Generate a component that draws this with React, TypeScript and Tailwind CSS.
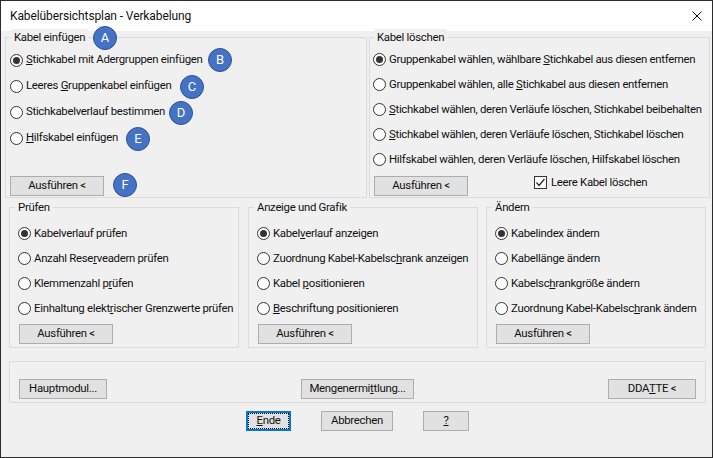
import React from "react";

const font = { fontFamily: 'Roboto, sans-serif' };

function Radio({ on }: { on?: boolean }) {
  return (
    <span className="w-[13px] h-[13px] shrink-0 rounded-full border border-[#333333] bg-white flex items-center justify-center">
      {on && <span className="w-[7px] h-[7px] rounded-full bg-[#333333]" />}
    </span>
  );
}

function Row({ on, h, children }: { on?: boolean; h: string; children: React.ReactNode }) {
  return (
    <div className={`flex items-center gap-[3px] whitespace-nowrap ${h}`}>
      <Radio on={on} />
      <span>{children}</span>
    </div>
  );
}

function Btn({ w, focus, children }: { w: string; focus?: boolean; children: React.ReactNode }) {
  if (focus) {
    return (
      <div className={`${w} h-[20px] border-2 border-[#0078d7] bg-[#e1e1e1] flex items-center justify-center`}>
        <div className="w-full h-full border border-dotted border-black flex items-center justify-center">{children}</div>
      </div>
    );
  }
  return <div className={`${w} h-[20px] border border-[#adadad] bg-[#e1e1e1] flex items-center justify-center`}>{children}</div>;
}

function Legend({ children, x }: { children: React.ReactNode; x: string }) {
  return <span className={`absolute -top-[9px] ${x} bg-[#f0f0f0] px-[3px] leading-[16px]`}>{children}</span>;
}

function Badge({ c, cls }: { c: string; cls: string }) {
  return (
    <span className={`absolute ${cls} w-[24px] h-[24px] rounded-full bg-[#4472c4] border border-[#2f528f] text-white text-[13px] tracking-normal flex items-center justify-center`}>
      {c}
    </span>
  );
}

export default function App() {
  return (
    <div style={font} className="relative w-[713px] h-[458px] border border-[#2b2b2b] bg-[#f0f0f0] text-[11.4px] tracking-[-0.3px] text-[#111111] flex flex-col overflow-hidden">
      <div className="h-[30px] bg-white flex items-center justify-between pl-[9px] pr-[10px] text-[12px] tracking-[-0.1px] shrink-0">
        <span>Kabelübersichtsplan - Verkabelung</span>
        <svg width="10" height="10" viewBox="0 0 10 10" stroke="#111" strokeWidth="1" fill="none"><path d="M0.5 0.5L9.5 9.5M9.5 0.5L0.5 9.5" /></svg>
      </div>

      <div className="flex gap-[2px] pl-[4px] mt-[6px] h-[161px]">
        <div className="relative w-[362px] border border-[#dcdcdc] pt-[9px] pl-[4px] flex flex-col">
          <Legend x="left-[5px]">Kabel einfügen</Legend>
          <Row on h="h-[26px]"><u>S</u>tichkabel mit Adergruppen einfügen</Row>
          <Row h="h-[26px]">Leeres <u>G</u>ruppenkabel einfügen</Row>
          <Row h="h-[26px]">Stichkabelverlauf bestimmen</Row>
          <Row h="h-[26px]"><u>H</u>ilfskabel einfügen</Row>
          <div className="mt-auto mb-[1px]"><Btn w="w-[94px]">Ausführen &lt;</Btn></div>
        </div>
        <div className="relative w-[341px] border border-[#dcdcdc] pt-[9px] pl-[3px] flex flex-col">
          <Legend x="left-[4px]">Kabel löschen</Legend>
          <Row on h="h-[25px]">Gruppenkabel wählen, wählbare <u>S</u>tichkabel aus diesen entfernen</Row>
          <Row h="h-[25px]">Gruppenkabel wählen, alle <u>S</u>tichkabel aus diesen entfernen</Row>
          <Row h="h-[25px]"><u>S</u>tichkabel wählen, deren Verläufe löschen, Stichkabel beibehalten</Row>
          <Row h="h-[25px]"><u>S</u>tichkabel wählen, deren Verläufe löschen, Stichkabel löschen</Row>
          <Row h="h-[25px]">Hilfskabel wählen, deren Verläufe löschen, Hilfskabel löschen</Row>
          <div className="flex items-start mt-auto mb-[1px] ml-[1px]">
            <Btn w="w-[94px]">Ausführen &lt;</Btn>
            <div className="flex items-center gap-[4px] ml-[66px] h-[13px]">
              <span className="w-[13px] h-[13px] border border-[#333333] bg-white flex items-center justify-center">
                <svg width="11" height="11" viewBox="0 0 11 11" fill="none" stroke="#222" strokeWidth="1.2"><path d="M1.5 5.5L4 8.5L9.5 2" /></svg>
              </span>
              <span>Leere Kabel löschen</span>
            </div>
          </div>
        </div>
      </div>

      <div className="flex pl-[8px] mt-[9px] h-[141px] gap-[9px]">
        <div className="relative w-[230px] border border-[#dcdcdc] pt-[13px] pl-[8px]">
          <Legend x="left-[5px]">Prüfen</Legend>
          <Row on h="h-[25px]">Kabelverlauf prüfen</Row>
          <Row h="h-[25px]">Anzahl Rese<u>r</u>veadern prüfen</Row>
          <Row h="h-[25px]">Klemmenzahl p<u>r</u>üfen</Row>
          <Row h="h-[25px]">Einhaltung elekt<u>r</u>ischer Grenzwerte prüfen</Row>
          <div className="mt-[3px] ml-[1px]"><Btn w="w-[94px]">Ausführen &lt;</Btn></div>
        </div>
        <div className="relative w-[230px] border border-[#dcdcdc] pt-[13px] pl-[8px]">
          <Legend x="left-[5px]">Anzeige und Grafik</Legend>
          <Row on h="h-[25px]">Kabel<u>v</u>erlauf anzeigen</Row>
          <Row h="h-[25px]">Zuordnung Kabel-Kabelsc<u>h</u>rank anzeigen</Row>
          <Row h="h-[25px]">Kabel <u>p</u>ositionieren</Row>
          <Row h="h-[25px]"><u>B</u>eschriftung positionieren</Row>
          <div className="mt-[3px] ml-[1px]"><Btn w="w-[94px]">Ausführen &lt;</Btn></div>
        </div>
        <div className="relative w-[220px] border border-[#dcdcdc] -ml-[1px] pt-[13px] pl-[8px]">
          <Legend x="left-[5px]">Ändern</Legend>
          <Row on h="h-[25px]">Kabelindex ändern</Row>
          <Row h="h-[25px]">Kabellänge ändern</Row>
          <Row h="h-[25px]">Kabelsc<u>h</u>rankgröße ändern</Row>
          <Row h="h-[25px]">Zuordnung Kabel-Kabelsc<u>h</u>rank ändern</Row>
          <div className="mt-[3px] ml-[1px]"><Btn w="w-[94px]">Ausführen &lt;</Btn></div>
        </div>
      </div>

      <div className="ml-[8px] mt-[13px] w-[697px] h-[42px] border border-[#dcdcdc] flex items-end justify-between px-[9px] pb-[3px]">
        <Btn w="w-[88px]">Hauptmodul...</Btn>
        <Btn w="w-[113px]">Mengenermi<u>t</u>tlung...</Btn>
        <Btn w="w-[88px]">DDA<u>T</u>TE &lt;</Btn>
      </div>

      <div className="flex mt-[8px] pl-[245px] gap-[30px]">
        <Btn w="w-[45px]" focus><u>E</u>nde</Btn>
        <Btn w="w-[72px]">Abbrechen</Btn>
        <Btn w="w-[46px]"><u>?</u></Btn>
      </div>

      <Badge c="A" cls="left-[92px] top-[25px]" />
      <Badge c="B" cls="left-[207px] top-[47px]" />
      <Badge c="C" cls="left-[179px] top-[74px]" />
      <Badge c="D" cls="left-[168px] top-[100px]" />
      <Badge c="E" cls="left-[125px] top-[126px]" />
      <Badge c="F" cls="left-[112px] top-[172px]" />
    </div>
  );
}
